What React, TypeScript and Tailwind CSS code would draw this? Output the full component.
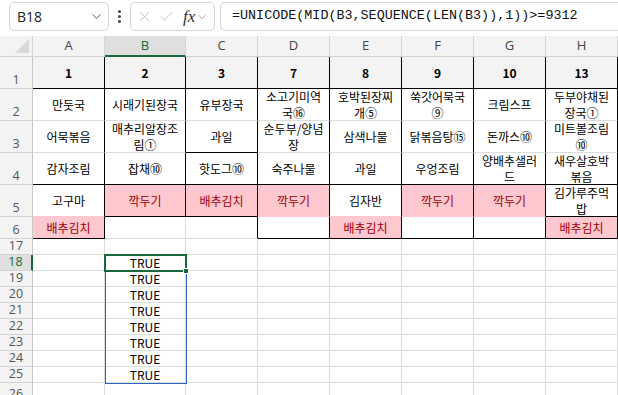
import React from 'react';
import { ChevronDown, X, Check } from 'lucide-react';

const COLS = ['A', 'B', 'C', 'D', 'E', 'F', 'G', 'H'];
const ROW1 = ['1', '2', '3', '7', '8', '9', '10', '13'];
const DATA: string[][] = [
  ['만둣국', '어묵볶음', '감자조림', '고구마', '배추김치'],
  ['시래기된장국', '매추리알장조\n림①', '잡채⑩', '깍두기', ''],
  ['유부장국', '과일', '핫도그⑩', '배추김치', ''],
  ['소고기미역\n국⑯', '순두부/양념\n장', '숙주나물', '깍두기', ''],
  ['호박된장찌\n개⑤', '삼색나물', '과일', '김자반', '배추김치'],
  ['쑥갓어묵국\n⑨', '닭볶음탕⑮', '우엉조림', '깍두기', ''],
  ['크림스프', '돈까스⑩', '양배추샐러\n드', '깍두기', ''],
  ['두부야채된\n장국①', '미트볼조림\n⑩', '새우살호박\n볶음', '김가루주먹\n밥', '배추김치'],
];
const LAST = [6, 5, 5, 6, 6, 6, 6, 6];
const PINK = new Set(['0-6', '1-5', '2-5', '3-5', '4-6', '5-5', '6-5', '7-6']);

const ROWS: { n: number; h: string }[] = [
  { n: 1, h: 'h-[32px]' },
  { n: 2, h: 'h-[32px]' },
  { n: 3, h: 'h-[32px]' },
  { n: 4, h: 'h-[32px]' },
  { n: 5, h: 'h-[32px]' },
  { n: 6, h: 'h-[22px]' },
  { n: 17, h: 'h-[16px]' },
  { n: 18, h: 'h-[16px]' },
  { n: 19, h: 'h-[16px]' },
  { n: 20, h: 'h-[16px]' },
  { n: 21, h: 'h-[16px]' },
  { n: 22, h: 'h-[16px]' },
  { n: 23, h: 'h-[16px]' },
  { n: 24, h: 'h-[16px]' },
  { n: 25, h: 'h-[16px]' },
  { n: 26, h: 'h-[20px]' },
];

const isPink = (ci: number, r: number) => PINK.has(`${ci}-${r}`);

function bottomBlack(ci: number, r: number) {
  if (r === 1 || r === 4) return true;
  if (r === LAST[ci]) return true;
  if (ci === 2 && r === 3) return true;
  if (ci === 7 && r === 5) return true;
  return false;
}
function rightBlack(ci: number, r: number) {
  if (r < 1 || r > 6) return false;
  const m = ci < 7 ? Math.max(LAST[ci], LAST[ci + 1]) : LAST[ci];
  return r <= m;
}

function Cell({ ci, r, h }: { ci: number; r: number; h: string }) {
  const pink = isPink(ci, r);
  let bcls = 'border-b-[#dcdcdc]';
  if (r <= 6 && bottomBlack(ci, r)) bcls = 'border-b-black';
  else if (pink || isPink(ci, r + 1)) bcls = 'border-b-[#ffc7ce]';
  const rcls = rightBlack(ci, r) ? 'border-r-black' : 'border-r-[#dcdcdc]';
  let text = '';
  if (r === 1) text = ROW1[ci];
  else if (r >= 2 && r <= 6) text = DATA[ci][r - 2];
  else if (ci === 1 && r >= 18 && r <= 25) text = 'TRUE';
  const bg = r === 1 ? 'bg-[#f3f3f3]' : pink ? 'bg-[#ffc7ce]' : 'bg-white';
  const color = pink ? 'text-[#9c0006]' : 'text-black';
  const weight = r === 1 ? 'font-bold' : 'font-normal';
  const lines = text.split('\n');
  return (
    <div
      className={`${h} border-r border-b ${bcls} ${rcls} ${bg} ${color} ${weight} flex flex-col items-center justify-center text-center text-[12px] leading-[16px] overflow-hidden whitespace-nowrap`}
    >
      {text &&
        lines.map((l, i) => (
          <span key={i} className="block shrink-0">
            {l}
          </span>
        ))}
    </div>
  );
}

export default function App() {
  return (
    <div
      className="relative w-[618px] h-[395px] overflow-hidden bg-white"
      style={{ fontFamily: '"Noto Sans CJK KR", "Noto Sans", sans-serif' }}
    >
      {/* formula bar */}
      <div className="h-[36px] flex items-start pt-[2px] bg-white">
        <div className="ml-[9px] w-[100px] h-[29px] rounded-[5px] border border-[#d6d6d6] bg-white flex items-center pl-[7px] pr-[4px]">
          <span className="text-[14px] text-[#222]" style={{ fontFamily: '"Open Sans", sans-serif' }}>
            B18
          </span>
          <ChevronDown className="ml-auto text-[#444]" size={15} strokeWidth={1.4} />
        </div>
        <div className="w-[21px] h-[29px] flex flex-col items-center justify-center gap-[2px]">
          <span className="w-[3px] h-[3px] rounded-full bg-[#444]" />
          <span className="w-[3px] h-[3px] rounded-full bg-[#444]" />
          <span className="w-[3px] h-[3px] rounded-full bg-[#444]" />
        </div>
        <div className="w-[85px] h-[29px] rounded-[5px] border border-[#d6d6d6] bg-white flex items-center pl-[5px]">
          <X size={17} strokeWidth={1} className="text-[#a8a8a8]" />
          <Check size={17} strokeWidth={1} className="ml-[5px] text-[#a8a8a8]" />
          <span
            className="ml-[8px] text-[17px] italic text-[#333] leading-none"
            style={{ fontFamily: '"Liberation Serif", serif' }}
          >
            fx
          </span>
          <ChevronDown className="ml-[1px] text-[#777]" size={12} strokeWidth={1.3} />
        </div>
        <div className="ml-[5px] flex-1 h-[29px] rounded-l-[5px] border border-r-0 border-[#d6d6d6] bg-white flex items-center pl-[11px]">
          <span
            className="text-[13.4px] text-[#111] whitespace-nowrap"
            style={{ fontFamily: '"Liberation Mono", monospace' }}
          >
            =UNICODE(MID(B3,SEQUENCE(LEN(B3)),1))&gt;=9312
          </span>
        </div>
      </div>

      {/* grid */}
      <div className="grid grid-cols-[33px_72px_81px_72px_72px_72px_72px_72px_72px]">
        {/* column header row */}
        <div className="h-[21px] bg-[#f3f3f3] border-r border-b border-[#d4d4d4] relative">
          <svg className="absolute right-[3px] bottom-[3px]" width="14" height="14" viewBox="0 0 14 14">
            <polygon points="14,0 14,14 0,14" fill="#d9d9d9" />
          </svg>
        </div>
        {COLS.map((c, i) => (
          <div
            key={c}
            className={`h-[21px] flex items-center justify-center text-[13px] border-r border-[#d4d4d4] ${
              i === 1
                ? 'bg-[#dfdfdf] text-[#17683a] border-b-2 border-b-[#17683a]'
                : 'bg-[#f3f3f3] text-[#444] border-b border-b-[#d4d4d4]'
            }`}
            style={{ fontFamily: '"Open Sans", sans-serif' }}
          >
            {c}
          </div>
        ))}

        {ROWS.map((row) => (
          <React.Fragment key={row.n}>
            <div
              className={`${row.h} flex items-end justify-center text-[12.5px] leading-[14px] pb-[1px] border-b border-b-[#d4d4d4] ${
                row.n === 18
                  ? 'bg-[#dfdfdf] text-[#17683a] border-r-2 border-r-[#17683a]'
                  : 'bg-[#f3f3f3] text-[#555] border-r border-r-[#c8c8c8]'
              }`}
              style={{ fontFamily: '"Open Sans", sans-serif' }}
            >
              {row.n}
            </div>
            {COLS.map((c, ci) => (
              <Cell key={c} ci={ci} r={row.n} h={row.h} />
            ))}
          </React.Fragment>
        ))}
      </div>

      {/* selection overlays */}
      <div className="absolute left-[105px] top-[271px] w-[82px] h-[113px] border border-[#2f63c0] pointer-events-none" />
      <div className="absolute left-[104px] top-[254px] w-[83px] h-[18px] border-2 border-[#17683a] pointer-events-none" />
      <div className="absolute left-[183px] top-[268px] w-[6px] h-[6px] bg-[#17683a] border border-white pointer-events-none" />
    </div>
  );
}
